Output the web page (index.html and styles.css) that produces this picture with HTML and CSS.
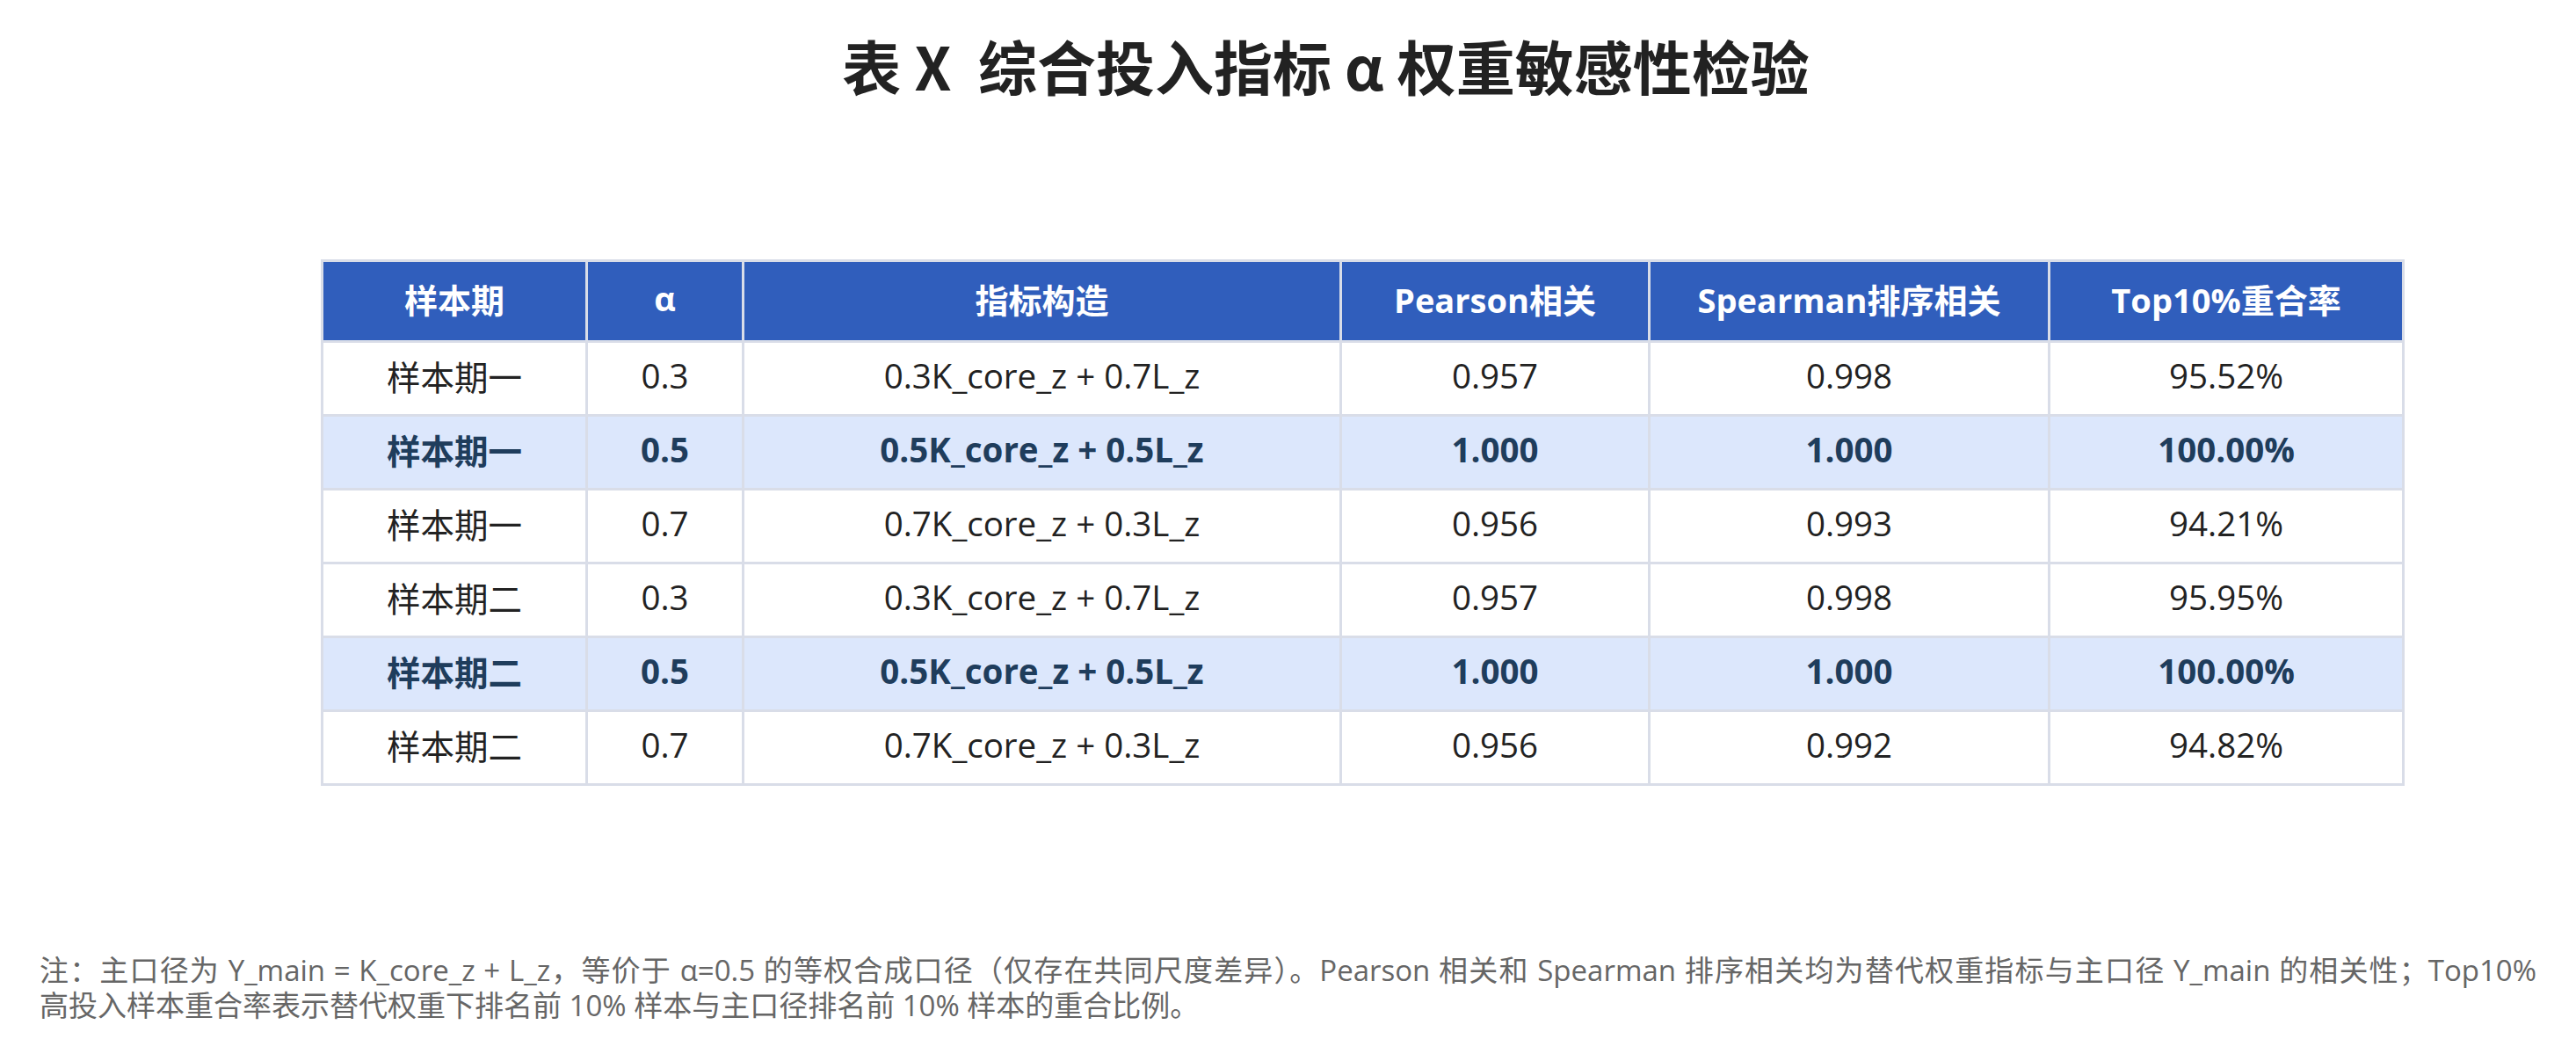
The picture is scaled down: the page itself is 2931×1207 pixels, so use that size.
FILE: index.html
```html
<!DOCTYPE html>
<html lang="zh-CN">
<head>
<meta charset="utf-8">
<title>表 X 综合投入指标 α 权重敏感性检验</title>
<link rel="stylesheet" href="styles.css">
</head>
<body>
<div class="page">
  <h1 class="title">表 X&nbsp; 综合投入指标 α 权重敏感性检验</h1>
  <table class="data">
    <colgroup>
      <col class="c1"><col class="c2"><col class="c3"><col class="c4"><col class="c5"><col class="c6">
    </colgroup>
    <thead>
      <tr><th>样本期</th><th>α</th><th>指标构造</th><th>Pearson相关</th><th>Spearman排序相关</th><th>Top10%重合率</th></tr>
    </thead>
    <tbody>
      <tr><td>样本期一</td><td>0.3</td><td>0.3K_core_z + 0.7L_z</td><td>0.957</td><td>0.998</td><td>95.52%</td></tr>
      <tr class="hl"><td>样本期一</td><td>0.5</td><td>0.5K_core_z + 0.5L_z</td><td>1.000</td><td>1.000</td><td>100.00%</td></tr>
      <tr><td>样本期一</td><td>0.7</td><td>0.7K_core_z + 0.3L_z</td><td>0.956</td><td>0.993</td><td>94.21%</td></tr>
      <tr><td>样本期二</td><td>0.3</td><td>0.3K_core_z + 0.7L_z</td><td>0.957</td><td>0.998</td><td>95.95%</td></tr>
      <tr class="hl"><td>样本期二</td><td>0.5</td><td>0.5K_core_z + 0.5L_z</td><td>1.000</td><td>1.000</td><td>100.00%</td></tr>
      <tr><td>样本期二</td><td>0.7</td><td>0.7K_core_z + 0.3L_z</td><td>0.956</td><td>0.992</td><td>94.82%</td></tr>
    </tbody>
  </table>
  <p class="note"><span class="note-first">注：主口径为 Y_main = K_core_z + L_z，等价于 α=0.5 的等权合成口径（仅存在共同尺度差异）。Pearson 相关和 Spearman 排序相关均为替代权重指标与主口径 Y_main 的相关性；Top10%</span> 高投入样本重合率表示替代权重下排名前 10% 样本与主口径排名前 10% 样本的重合比例。</p>
</div>
</body>
</html>
```
FILE: styles.css
```css
html, body {
  margin: 0;
  padding: 0;
  background: #ffffff;
}

.page {
  padding: 0 45px;
  font-family: "Open Sans", "Noto Sans CJK SC", sans-serif;
  color: #222222;
}

.title {
  margin: 0;
  padding: 32px 0 0 86px;
  text-align: center;
  font-family: "Noto Sans CJK SC", sans-serif;
  font-size: 67px;
  font-weight: 700;
  line-height: 84px;
  color: #222222;
}

.data {
  margin: 179px 0 0 320px;
  width: 2371px;
  table-layout: fixed;
  border-collapse: collapse;
  border: 3px solid #d9dde8;
  font-size: 38.5px;
}

.c1 { width: 301px; }
.c2 { width: 178px; }
.c3 { width: 680px; }
.c4 { width: 351px; }
.c5 { width: 455px; }
.c6 { width: 403px; }

.data th,
.data td {
  border: 3px solid #d9dde8;
  padding: 0 0 7px 0;
  text-align: center;
  vertical-align: middle;
  white-space: nowrap;
}

.data th {
  height: 82px;
  background: #305ebc;
  color: #ffffff;
  font-size: 38px;
  font-weight: 700;
}

.data td {
  height: 74px;
  background: #ffffff;
  color: #222222;
}

.data tr.hl td {
  background: #dce7fc;
  color: #1f3d5c;
  font-weight: 700;
}

.note {
  margin: 190px 0 0 0;
  font-size: 33px;
  line-height: 40px;
  color: #666666;
}

.note-first {
  display: block;
  text-align: justify;
  text-align-last: justify;
}
```
